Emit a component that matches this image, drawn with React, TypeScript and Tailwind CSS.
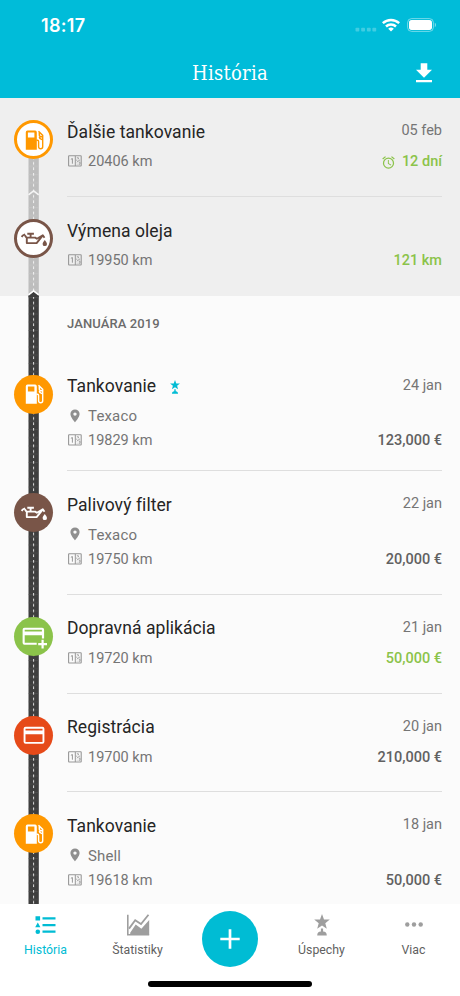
import type { ReactNode } from 'react';
import clsx from 'clsx';

/**
 * Vehicle history screen
 * Timeline of upcoming and past entries with a bottom tab bar
 */

type IconName = 'fuel' | 'oil' | 'income' | 'expense';

interface Entry {
  id: number;
  icon: IconName;
  title: string;
  date?: string;
  place?: string;
  km: string;
  value: string;
  green?: boolean;
  alarm?: boolean;
  award?: boolean;
  size: string;
}

const upcoming: Entry[] = [
  { id: 1, icon: 'fuel', title: 'Ďalšie tankovanie', date: '05 feb', km: '20406 km', value: '12 dní', green: true, alarm: true, size: 'h-[99px]' },
  { id: 2, icon: 'oil', title: 'Výmena oleja', km: '19950 km', value: '121 km', green: true, size: 'h-[99px]' },
];

const history: Entry[] = [
  { id: 3, icon: 'fuel', title: 'Tankovanie', date: '24 jan', place: 'Texaco', km: '19829 km', value: '123,000 €', award: true, size: 'h-[118.5px]' },
  { id: 4, icon: 'oil', title: 'Palivový filter', date: '22 jan', place: 'Texaco', km: '19750 km', value: '20,000 €', size: 'h-[123.5px]' },
  { id: 5, icon: 'income', title: 'Dopravná aplikácia', date: '21 jan', km: '19720 km', value: '50,000 €', green: true, size: 'h-[99px]' },
  { id: 6, icon: 'expense', title: 'Registrácia', date: '20 jan', km: '19700 km', value: '210,000 €', size: 'h-[98.5px]' },
  { id: 7, icon: 'fuel', title: 'Tankovanie', date: '18 jan', place: 'Shell', km: '19618 km', value: '50,000 €', size: 'h-[112px]' },
];

const iconColors: Record<IconName, { solid: string; outline: string }> = {
  fuel: { solid: 'bg-[#ff9800] text-white', outline: 'border-[3px] border-[#ff9800] bg-white text-[#ff9800]' },
  oil: { solid: 'bg-[#795548] text-white', outline: 'border-[3px] border-[#795548] bg-white text-[#795548]' },
  income: { solid: 'bg-[#8bc34a] text-white', outline: 'border-[3px] border-[#8bc34a] bg-white text-[#8bc34a]' },
  expense: { solid: 'bg-[#e64a19] text-white', outline: 'border-[3px] border-[#e64a19] bg-white text-[#e64a19]' },
};

const iconShapes: Record<IconName, ReactNode> = {
  fuel: (
    <>
      <path
        fill="currentColor"
        fillRule="evenodd"
        d="M5.500 2.600h7.600a1.700 1.700 0 0 1 1.700 1.700v17.400h-11V4.300a1.700 1.700 0 0 1 1.700-1.700zM5.900 4.400v5h6.500v-5z"
      />
      <path
        fill="none"
        stroke="currentColor"
        strokeWidth="1.400"
        d="M14.500 12.200h.9q1.200 0 1.200 1.200v5.300a2.050 2.050 0 0 0 4.100 0V7.400L16.500 3.200M17.300 4v2.800a1.900 1.900 0 0 0 1.900 1.900h1.500M17.300 8.700l.6 1.700 2.800 1.600"
      />
    </>
  ),
  oil: (
    <>
      <path
        fill="none"
        stroke="currentColor"
        strokeWidth="1.900"
        strokeLinejoin="round"
        d="M4.800 10.600h8.400l1.700 1.100L20.800 8.300l1.700 2.400M4.800 10.600v5.500h9.800l6.200-7.800M8.600 10.400V6.900M5.300 6.700h6.600M-.3 10.100l1-1.600 2.500-1.200M3 8.400l1.400 2.200"
      />
      <path fill="currentColor" d="M22.800 12.900s2.200 2.600 2.200 4a2.200 2.200 0 0 1-4.400 0c0-1.400 2.200-4 2.200-4z" />
    </>
  ),
  income: (
    <path
      fill="currentColor"
      fillRule="evenodd"
      d="M2.500 3.800h17.700a1.900 1.900 0 0 1 1.900 1.900v8.800h-2.200v-3.300H2.700v7.500h12v2H2.500a1.900 1.900 0 0 1-1.900-1.900V5.700a1.900 1.900 0 0 1 1.900-1.900zM2.700 5.700v1.800h17.200V5.700zM19.500 15.800h2.200v3.300H25v2.200h-3.300v3.300h-2.200v-3.300h-3.300v-2.200h3.300z"
    />
  ),
  expense: (
    <path
      fill="currentColor"
      fillRule="evenodd"
      d="M3.600 3.800h16.800a2 2 0 0 1 2 2v13a2 2 0 0 1-2 2H3.600a2 2 0 0 1-2-2v-13a2 2 0 0 1 2-2zM3.500 5.700v1.800h17V5.700zM3.500 11.300v7.600h17v-7.600z"
    />
  ),
};

function EntryIcon({ name, outline }: { name: IconName; outline?: boolean }) {
  return (
    <div
      className={clsx(
        'flex size-[39px] shrink-0 items-center justify-center rounded-full',
        outline ? iconColors[name].outline : iconColors[name].solid,
      )}
    >
      <svg viewBox="0 0 24 24" className="size-[24px] shrink-0 overflow-visible">
        {iconShapes[name]}
      </svg>
    </div>
  );
}

// Vertical road drawn behind the timeline icons
function Road({ light, id }: { light?: boolean; id: string }) {
  return (
    <svg className="absolute top-0 left-[28px] h-full w-[11px]">
      <defs>
        <pattern id={id} width="11" height="16.5" patternUnits="userSpaceOnUse">
          <rect x="0.5" width="10.3" height="16.5" fill={light ? '#bdbdbd' : '#3e3e3e'} />
          <path d="M0.500 1.500h10.300M0.500 9.700h10.300" stroke={light ? '#c8c8c8' : '#565656'} strokeWidth="0.5" />
          <path d="M5.600 0v16.500" stroke={light ? '#f3f3f3' : '#e0e0e0'} strokeWidth="1" strokeDasharray="2.700 2.800" />
        </pattern>
      </defs>
      <rect width="11" height="100%" fill={`url(#${id})`} />
    </svg>
  );
}

function OdometerIcon() {
  return (
    <svg viewBox="0 0 14 12" className="mb-[2px] h-[12px] w-[14px]" fill="none" stroke="#979797">
      <rect x="0.600" y="0.800" width="12.600" height="10.200" rx="0.500" strokeWidth="1.100" />
      <path d="M7.300 1v10M2.900 4.300l1.500-.8v5.200" strokeWidth="1" />
      <path
        d="M8.800 2.800h1.600v1.400M12 4.800 8.800 7.200M8.800 4.600v1.200M10.800 7.200h1.200v2h-1.400M8.800 9.200h.6"
        strokeWidth="0.900"
      />
    </svg>
  );
}

function PinIcon() {
  return (
    <svg viewBox="0 0 10 14" className="mb-[2px] h-[14px] w-[10px]" fill="#8f8f8f" fillRule="evenodd">
      <path d="M5 0.500a4.600 4.600 0 0 1 4.600 4.600c0 3.300-4.600 8.300-4.600 8.300S.400 8.400.400 5.100A4.600 4.600 0 0 1 5 .500zM5 3.400a1.700 1.700 0 1 0 0 3.400 1.700 1.700 0 0 0 0-3.400z" />
    </svg>
  );
}

function AlarmIcon() {
  return (
    <svg viewBox="0 0 24 24" className="size-[15px]" fill="currentColor">
      <path d="M22 5.720l-4.600-3.860-1.290 1.530 4.600 3.860L22 5.720zM7.880 3.390L6.600 1.860 2 5.710l1.290 1.530 4.590-3.850zM12.500 8H11v6l4.750 2.850.750-1.230-4-2.370V8zM12 4a9 9 0 1 0 0 18 9 9 0 0 0 0-18zm0 16a7 7 0 1 1 0-14 7 7 0 0 1 0 14z" />
    </svg>
  );
}

function AwardIcon({ className }: { className: string }) {
  return (
    <svg viewBox="0 0 18 22" className={className} fill="currentColor">
      <path d="m9 0 2 5.400 5.800.2-4.500 3.600 1.500 5.500L9 11.500l-4.800 3.200 1.500-5.500L1.200 5.600 7 5.400zM7.900 14.400h2.200v3.200c2.400.2 3.700 1.300 3.700 3.900H4.200c0-2.600 1.300-3.700 3.700-3.900z" />
    </svg>
  );
}

function TimelineEntry({ entry, outline, divider }: { entry: Entry; outline?: boolean; divider: boolean }) {
  return (
    <div className={clsx('relative flex pl-[14px]', entry.size)}>
      <div className="pt-[22px]">
        <EntryIcon name={entry.icon} outline={outline} />
      </div>
      <div
        className={clsx(
          'mr-[18px] ml-[14px] flex flex-1 flex-col border-b pt-[22px]',
          divider ? 'border-[#dedede]' : 'border-transparent',
        )}
      >
        <div className="flex h-6 items-center justify-between">
          <h2 className="flex items-center text-[17.500px] tracking-[0.070px] text-[#252525]">
            {entry.title}
            {entry.award && <AwardIcon className="ml-[13px] h-[14px] w-[12px] text-[#00bcd4]" />}
          </h2>
          <span className="-mt-[2px] text-[14.500px] text-[#757575]">{entry.date}</span>
        </div>
        {entry.place && (
          <div className="mt-[6px] -mb-[6px] flex h-6 items-center text-[15px] tracking-[0.150px] text-[#757575]">
            <span className="flex w-[21px] pl-[3px]">
              <PinIcon />
            </span>
            {entry.place}
          </div>
        )}
        <div
          className={clsx(
            'flex h-6 items-center justify-between text-[14.500px]',
            outline ? 'mt-[6px]' : 'mt-[6.500px]',
          )}
        >
          <div className="flex items-center text-[#757575]">
            <span className="flex w-[21px] pl-[1px]">
              <OdometerIcon />
            </span>
            {entry.km}
          </div>
          <div
            className={clsx(
              'flex items-center gap-[6px] font-medium',
              entry.green ? 'text-[#8bc34a]' : 'text-[#616161]',
            )}
          >
            {entry.alarm && <AlarmIcon />}
            {entry.value}
          </div>
        </div>
      </div>
    </div>
  );
}

function StatusBar() {
  return (
    <div className="flex h-[50px] items-center justify-between pr-[24px] pl-[41px]">
      <span className="font-['Inter','Liberation_Sans',sans-serif] text-[18px] font-semibold tracking-[0.300px]">
        18:17
      </span>
      <div className="flex items-center">
        <svg viewBox="0 0 22 5" className="mt-[9px] mr-[5px] h-[5px] w-[22px]" fill="#ffffff" fillOpacity="0.250">
          <rect x="0.500" y="0.800" width="3.800" height="3.800" rx="0.800" />
          <rect x="6.200" y="0.800" width="3.800" height="3.800" rx="0.800" />
          <rect x="11.900" y="0.800" width="3.800" height="3.800" rx="0.800" />
          <rect x="17.400" y="0.800" width="3.800" height="3.800" rx="0.800" />
        </svg>
        <svg viewBox="0 0 18 14" className="mr-[7px] h-[14px] w-[18px]" fill="none" stroke="#ffffff" strokeWidth="2.500">
          <path d="M0.800 5.200a11.800 11.800 0 0 1 16.400 0M4 8.500a7.200 7.200 0 0 1 10 0" />
          <path d="M6.200 10.700a4.200 4.200 0 0 1 5.600 0L9 13.600z" fill="#ffffff" stroke="none" />
        </svg>
        <svg viewBox="0 0 29 14" className="h-[14px] w-[29px]">
          <rect x="0.600" y="0.600" width="25.800" height="12.800" rx="4" fill="none" stroke="#ffffff" strokeOpacity="0.450" />
          <rect x="2" y="2.100" width="23" height="9.800" rx="2.600" fill="#ffffff" />
          <path d="M27.800 4.800v4.400q1.200-.6 1.200-2.200t-1.200-2.200z" fill="#ffffff" fillOpacity="0.500" />
        </svg>
      </div>
    </div>
  );
}

function Header() {
  return (
    <header className="h-[98px] shrink-0 bg-[#00bcd9] text-white">
      <StatusBar />
      <div className="flex h-[46px] items-center pr-[28px]">
        <span className="w-[44px]" />
        <h1 className="flex-1 text-center font-['DejaVu_Serif_Condensed','DejaVu_Serif',serif] text-[20px] leading-none tracking-[0.300px]">
          História
        </h1>
        <svg viewBox="0 0 16 20" className="h-[20px] w-[16px]" fill="#ffffff">
          <path d="M4.700 0.300h6.600v6.500H16l-8 8-8-8h4.700zM0 17h16v2.200H0z" />
        </svg>
      </div>
    </header>
  );
}

function Tab({ label, active, children }: { label: string; active?: boolean; children: ReactNode }) {
  return (
    <div
      className={clsx(
        'flex w-[92px] flex-col items-center pr-[1px]',
        active ? 'text-[#00bcd4]' : 'text-[#9e9e9e]',
      )}
    >
      <div className="flex h-[41px] items-center justify-center">{children}</div>
      <span className={clsx('mt-px text-[12.300px] leading-[8px]', !active && 'text-[#5f5f5f]')}>{label}</span>
    </div>
  );
}

function TabBar() {
  return (
    <nav className="relative z-10 flex h-[92px] shrink-0 flex-col bg-white">
      <div className="flex flex-1">
        <Tab label="História" active>
          <svg viewBox="0 0 21 20" className="h-[20px] w-[21px]" fill="currentColor">
            <path d="M0.500 1.200h4.600v4.200H.500zM7.500 2.200h13v2.200h-13zM2.800 7.500l2.600 4.700H.200zM7.500 9h13v2.200h-13zM7.500 15.600h13v2.200h-13z" />
            <circle cx="2.800" cy="16.700" r="2.300" />
          </svg>
        </Tab>
        <Tab label="Štatistiky">
          <svg viewBox="0 0 24 22" className="h-[22px] w-[24px]">
            <path d="M1.800 0.800v19.900h21.400" fill="none" stroke="currentColor" strokeWidth="1.600" />
            <path d="M3 14.600 9.200 6.200l5.800 3.800 7.500-9.200" fill="none" stroke="currentColor" strokeWidth="1.800" />
            <path d="m4.200 18.800 5.500-8.200 5.700 4.200 7.800-8.700v14.400H4.200z" fill="currentColor" />
          </svg>
        </Tab>
        <div className="flex w-[92px] justify-center pt-[6.500px]">
          <div className="flex size-[56px] items-center justify-center rounded-full bg-[#00bcd4]">
            <svg viewBox="0 0 20 20" className="size-[20px]" stroke="#ffffff" strokeWidth="2.700">
              <path d="M10 0.300v19.400M0.300 10h19.400" />
            </svg>
          </div>
        </div>
        <Tab label="Úspechy">
          <AwardIcon className="h-[22px] w-[18px]" />
        </Tab>
        <Tab label="Viac">
          <svg viewBox="0 0 18 5" className="h-[5px] w-[18px]" fill="currentColor">
            <circle cx="2.300" cy="2.500" r="2.200" />
            <circle cx="9" cy="2.500" r="2.200" />
            <circle cx="15.700" cy="2.500" r="2.200" />
          </svg>
        </Tab>
      </div>
      <div className="mx-auto mb-[9px] h-[6px] w-[164px] rounded-full bg-black" />
    </nav>
  );
}

export default function App() {
  return (
    <div className="flex h-[996px] w-[460px] flex-col overflow-hidden bg-[#fbfbfb] font-['Roboto','Liberation_Sans',sans-serif]">
      <Header />
      <main className="flex-1 overflow-hidden">
        <section className="relative bg-[#efefef]">
          <div className="absolute top-[42px] bottom-0 left-0">
            <Road id="road-light" light />
          </div>
          {upcoming.map((entry, i) => (
            <TimelineEntry key={entry.id} entry={entry} outline divider={i === 0} />
          ))}
          <svg viewBox="0 0 11 6" className="absolute top-[92px] left-[28px] h-[6px] w-[11px]">
            <path d="m0.500 4.800 5.100-3.900 5.100 3.900" fill="none" stroke="#f5f5f5" strokeWidth="1.600" />
          </svg>
        </section>
        <section className="relative">
          <div className="absolute top-0 bottom-0 left-0">
            <Road id="road-dark" />
          </div>
          {/* Arrow where the travelled road begins */}
          <svg viewBox="0 0 11 7" className="absolute -top-[6px] left-[28px] h-[7px] w-[11px]">
            <path d="M0.500 7V5.500l5.100-3.900 5.100 3.900V7z" fill="#3e3e3e" />
            <path d="m0.500 4.800 5.100-3.900 5.100 3.900" fill="none" stroke="#ffffff" strokeWidth="1.600" />
          </svg>
          <h3 className="flex h-[56.500px] items-center pb-[2px] pl-[67px] text-[13px] font-medium tracking-[0.100px] text-[#6b6b6b]">
            JANUÁRA 2019
          </h3>
          {history.map((entry, i) => (
            <TimelineEntry key={entry.id} entry={entry} divider={i < history.length - 1} />
          ))}
        </section>
      </main>
      <TabBar />
    </div>
  );
}
